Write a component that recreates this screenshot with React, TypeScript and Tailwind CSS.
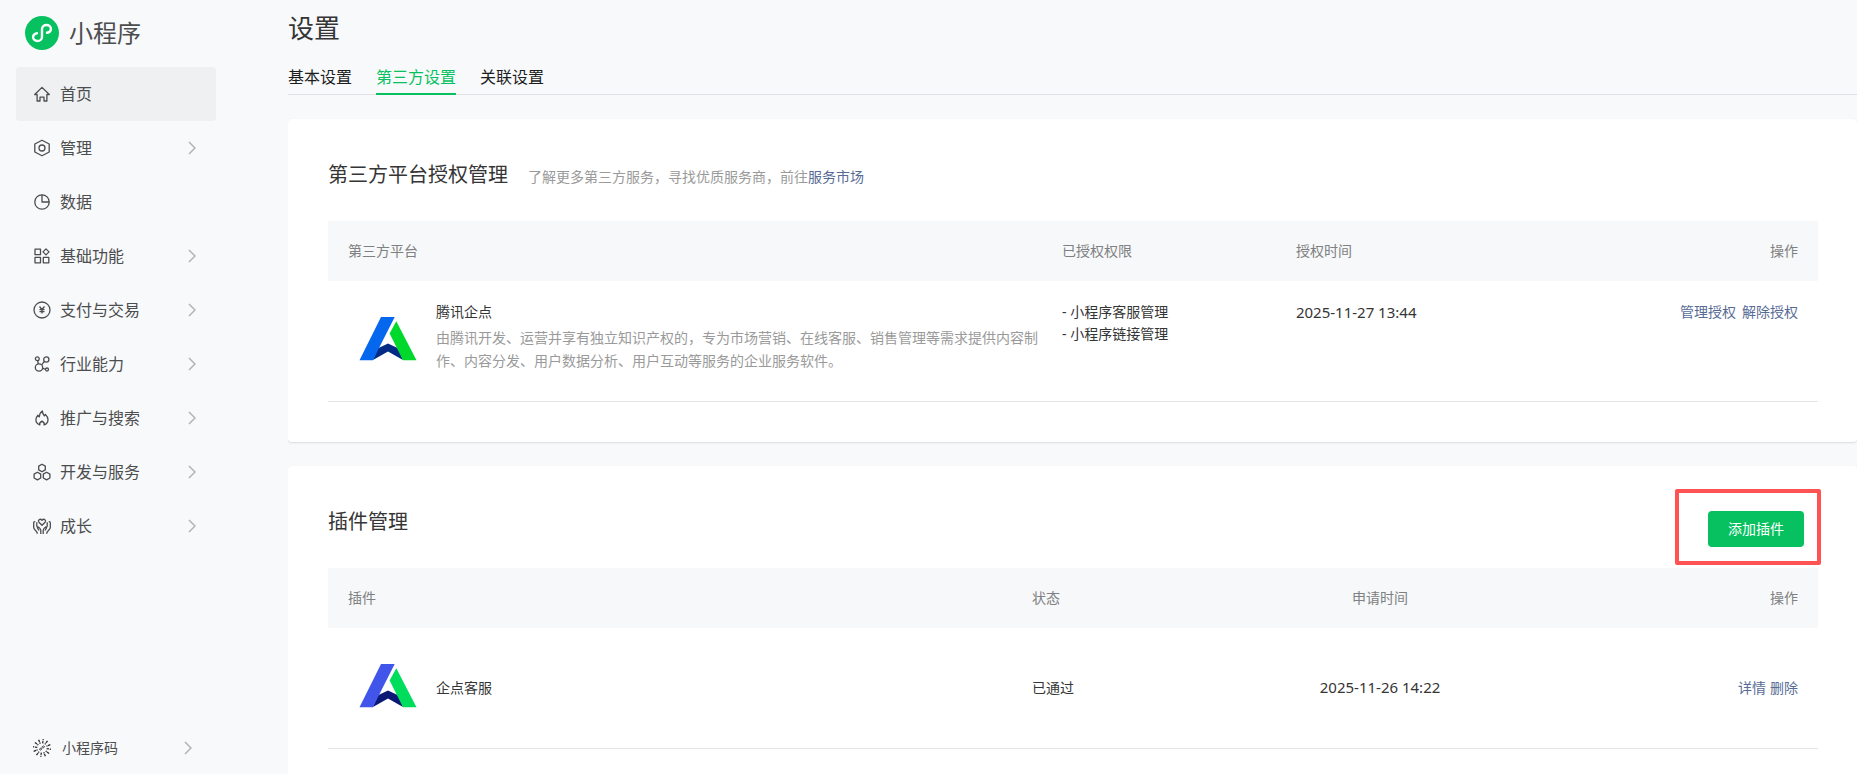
import React from "react";

const LogoMark = () => (
  <svg width="34" height="34" viewBox="0 0 34 34" fill="none" aria-hidden="true">
    <circle cx="17" cy="17" r="17" fill="#07c160" />
    <path
      d="M12 17.200c-2.200.4-3.900 1.900-3.900 3.900 0 2.300 2 3.900 4.400 3.900s4.500-1.700 4.500-4.100v-7.800c0-2.400 2-4.100 4.500-4.100s4.400 1.600 4.400 3.900c0 2-1.700 3.500-3.900 3.900"
      stroke="#fff"
      strokeWidth="2.400"
      strokeLinecap="round"
    />
  </svg>
);

const Icon: React.FC<{ children: React.ReactNode }> = ({ children }) => (
  <svg
    className="shrink-0"
    width="18"
    height="18"
    viewBox="0 0 18 18"
    fill="none"
    stroke="currentColor"
    strokeWidth="1.3"
    strokeLinejoin="round"
    aria-hidden="true"
  >
    {children}
  </svg>
);

const Chevron = () => (
  <svg width="8" height="14" viewBox="0 0 8 14" fill="none" stroke="#b2b3b5" strokeWidth="1.5" aria-hidden="true">
    <path d="M1 1l6 6-6 6" />
  </svg>
);

const icons = {
  home: (
    <Icon>
      <path d="M9 2.400 1.700 9.500h2.400V16h2.900v-3.800h4V16h2.900V9.500h2.400z" />
    </Icon>
  ),
  manage: (
    <Icon>
      <path d="M9 1.200 16.200 5v8L9 16.800 1.800 13V5z" />
      <circle cx="9" cy="9" r="3" />
    </Icon>
  ),
  data: (
    <Icon>
      <circle cx="9" cy="9" r="7.200" />
      <path d="M9 1.800V9h7.200" />
    </Icon>
  ),
  basic: (
    <Icon>
      <path d="M2 2.200h5.500v5.500H2zM2 10.300h5.500v5.500H2zM10.300 10.300h5.500v5.500h-5.500zM13 1.900l3 3-3 3-3-3z" />
    </Icon>
  ),
  pay: (
    <Icon>
      <circle cx="9" cy="9" r="8" />
      <path d="m6.500 5.500 2.500 3 2.500-3M9 8.500v4M6.500 8.700h5M6.500 10.700h5" />
    </Icon>
  ),
  industry: (
    <Icon>
      <circle cx="4.300" cy="3.800" r="1.900" />
      <circle cx="13.300" cy="4.500" r="2.600" />
      <circle cx="6" cy="12.500" r="3.700" />
      <circle cx="14" cy="14.500" r="1.500" />
      <path d="m4.700 5.700.5 3.200M11.400 6.400 8.600 9.800M9.500 13.400l3 .8" />
    </Icon>
  ),
  promote: (
    <Icon>
      <path d="M6.800 16c-2.400-.8-3.900-2.800-3.900-5.400 0-1.900.9-3.200 2-4.400.2.900.7 1.500 1.400 1.700.1-2.400 1.100-4.600 3-6 .1 2.300 1 3.500 2 4.900.6-.3 1-.8 1.100-1.400 1.500 1.400 2.600 3.200 2.600 5.200 0 2.600-1.600 4.700-3.900 5.400.5-1.300 0-2.700-2.100-3.800-2.100 1.100-2.700 2.500-2.200 3.800z" />
    </Icon>
  ),
  develop: (
    <Icon>
      <path d="m9 1.200 3.300 1.900v3.800L9 8.800 5.700 6.900V3.100zM4.400 9.200l3.300 1.900V15l-3.300 1.900L1.100 15v-3.900zM13.600 9.200l3.300 1.900V15l-3.300 1.900-3.300-1.900v-3.900z" />
    </Icon>
  ),
  grow: (
    <Icon>
      <path d="M9 8.300 5.900 5.200C4.500 3.500 6.800 1 9 3.200c2.200-2.200 4.500.3 3.100 2z" />
      <path d="M7.800 17v-3.600c0-1.700-2.600-4-3.400-3.200-.6.600 1.200 2 1.600 3.300M3.800 9.800V5.200M2.300 5C.9 4.200.7 5.200.7 6v4.500c0 2.600 3.600 3 3.600 6.300M10.200 17v-3.600c0-1.700 2.600-4 3.400-3.200.6.600-1.200 2-1.600 3.300M14.200 9.800V5.200M15.700 5c1.400-.8 1.600.2 1.600 1v4.500c0 2.600-3.600 3-3.600 6.300" />
    </Icon>
  ),
};

const navItems = [
  { label: "首页", icon: icons.home, active: true },
  { label: "管理", icon: icons.manage, expandable: true },
  { label: "数据", icon: icons.data },
  { label: "基础功能", icon: icons.basic, expandable: true },
  { label: "支付与交易", icon: icons.pay, expandable: true },
  { label: "行业能力", icon: icons.industry, expandable: true },
  { label: "推广与搜索", icon: icons.promote, expandable: true },
  { label: "开发与服务", icon: icons.develop, expandable: true },
  { label: "成长", icon: icons.grow, expandable: true },
];

const MiniCodeIcon = () => (
  <svg className="shrink-0 text-[#2c2c2c]" width="18" height="18" viewBox="0 0 18 18" fill="none" stroke="currentColor" aria-hidden="true">
    {Array.from({ length: 12 }, (_, i) => (
      <path
        key={i}
        d="M9 0v4.300"
        strokeWidth="1.300"
        strokeDasharray={i % 3 ? "2.600 .5" : "1.200 .8 2.300"}
        transform={`rotate(${i * 30 + 8} 9 9)`}
      />
    ))}
    <path
      d="M8 9.200c-1.100.1-1.700.8-1.300 1.500.6.700 1.900.3 2.100-.8l.4-1.800c.2-1.100 1.500-1.500 2.100-.8.400.7-.2 1.400-1.300 1.500"
      strokeWidth="0.900"
    />
  </svg>
);

const Sidebar = () => (
  <aside className="flex w-[288px] shrink-0 flex-col pl-4 text-[#4c4d4e]">
    <div className="mb-0.5 flex h-[65px] items-center gap-2.5 pl-[9px] text-2xl">
      <LogoMark />
      <span>小程序</span>
    </div>
    <nav className="w-[200px]">
      {navItems.map((item) => (
        <a
          key={item.label}
          href="#"
          className={`flex h-[54px] items-center gap-[9px] rounded pr-5 pl-[17px] text-base ${
            item.active ? "bg-[#eff0f2]" : ""
          }`}
        >
          {item.icon}
          <span className="flex-1">{item.label}</span>
          {item.expandable && <Chevron />}
        </a>
      ))}
    </nav>
    <a href="#" className="mt-auto flex h-[52px] w-[200px] items-center gap-[11px] pr-6 pl-[17px] text-sm">
      <MiniCodeIcon />
      <span className="flex-1">小程序码</span>
      <Chevron />
    </a>
  </aside>
);

// 企点图标，两处仅配色不同
const QidianLogo: React.FC<{ left: string; right: string; base: string }> = ({ left, right, base }) => (
  <svg className="shrink-0" width="80" height="80" viewBox="0 0 80 80" aria-hidden="true">
    <path d="M29.500 47.500 40 42.500l10.500 5L55 59l-15-8.500L25 59z" fill={base} />
    <path d="M33 16h13.700L30.500 48 25 59.300H11.500z" fill={left} />
    <path d="m48.300 20.300 20.200 39H55L41.600 32.500z" fill={right} />
  </svg>
);

const Th: React.FC<{ className?: string; children: React.ReactNode }> = ({ className = "", children }) => (
  <th className={`h-[60px] pl-5 font-normal ${className}`}>{children}</th>
);

const Link: React.FC<{ children: React.ReactNode }> = ({ children }) => (
  <a href="#" className="text-[#576b95]">
    {children}
  </a>
);

const Card: React.FC<{ children: React.ReactNode }> = ({ children }) => (
  <section className="rounded bg-white py-10 pr-[39px] pl-10 shadow-[0_1px_2px_rgba(0,0,0,0.12)]">{children}</section>
);

const tabs = ["基本设置", "第三方设置", "关联设置"];

export default function App() {
  return (
    <div className="flex h-screen overflow-hidden bg-[#f8f9fb] font-['Noto_Sans','Noto_Sans_CJK_SC',sans-serif] text-sm text-[#353535]">
      <Sidebar />
      <main className="min-w-0 flex-1 overflow-y-auto [scrollbar-width:none]">
        <h1 className="pt-2 text-[26px] leading-10">设置</h1>
        <div className="mt-3 mb-6 flex h-[35px] gap-6 border-b border-[#dfe0e3] text-base">
          {tabs.map((tab) => (
            <button
              key={tab}
              type="button"
              className={`h-[35px] border-b-2 ${
                tab === "第三方设置" ? "border-[#07c160] text-[#07c160]" : "border-transparent text-[#1d1d1e]"
              }`}
            >
              {tab}
            </button>
          ))}
        </div>

        <div className="flex flex-col gap-6">
          <Card>
            <div className="flex h-[62px] items-start gap-5 leading-8">
              <h2 className="text-xl leading-8">第三方平台授权管理</h2>
              <p className="pt-0.5 text-[#9a9a9a]">
                了解更多第三方服务，寻找优质服务商，前往<Link>服务市场</Link>
              </p>
            </div>
            <table className="w-full table-fixed text-left">
              <thead className="bg-[#f6f8f9] text-[#7e8081]">
                <tr>
                  <Th className="w-[714px]">第三方平台</Th>
                  <Th className="w-[15.7%]">已授权权限</Th>
                  <Th>授权时间</Th>
                  <Th className="pr-5 text-right">操作</Th>
                </tr>
              </thead>
              <tbody>
                <tr className="border-b border-[#e4e5e7] align-top leading-[22px]">
                  <td className="py-5 pl-5">
                    <div className="flex gap-2">
                      <QidianLogo left="#0467ee" right="#00d82b" base="#012b85" />
                      <div>
                        <div>腾讯企点</div>
                        <p className="pt-[3px] leading-[23px] text-[#9a9a9a]">
                          由腾讯开发、运营并享有独立知识产权的，专为市场营销、在线客服、销售管理等需求提供内容制作、内容分发、用户数据分析、用户互动等服务的企业服务软件。
                        </p>
                      </div>
                    </div>
                  </td>
                  <td className="py-5 pl-5">
                    <div>- 小程序客服管理</div>
                    <div>- 小程序链接管理</div>
                  </td>
                  <td className="py-5 pl-5 text-[15px]">2025-11-27 13:44</td>
                  <td className="px-5 py-5">
                    <div className="flex justify-end gap-1.5">
                      <Link>管理授权</Link>
                      <Link>解除授权</Link>
                    </div>
                  </td>
                </tr>
              </tbody>
            </table>
          </Card>

          <Card>
            <div className="flex h-[62px] items-start justify-between pr-3.5">
              <h2 className="text-xl leading-8">插件管理</h2>
              <div className="relative mt-[5px]">
                <button type="button" className="h-9 w-24 rounded bg-[#07c160] text-white">
                  添加插件
                </button>
                <div className="pointer-events-none absolute -top-[22px] -right-[17px] -bottom-[18px] -left-[33px] rounded-xs border-4 border-[#ff5252]" />
              </div>
            </div>
            <table className="w-full table-fixed text-left">
              <thead className="bg-[#f6f8f9] text-[#7e8081]">
                <tr>
                  <Th className="w-[684px]">插件</Th>
                  <Th className="w-[15%]">状态</Th>
                  <Th className="w-[19.4%] pr-5 text-center">申请时间</Th>
                  <Th className="pr-5 text-right">操作</Th>
                </tr>
              </thead>
              <tbody>
                <tr className="border-b border-[#e4e5e7]">
                  <td className="py-5 pl-5">
                    <div className="flex items-center gap-2">
                      <QidianLogo left="#4155ea" right="#00dc5c" base="#0b1876" />
                      <span>企点客服</span>
                    </div>
                  </td>
                  <td className="pl-5">已通过</td>
                  <td className="px-5 text-center text-[15px]">2025-11-26 14:22</td>
                  <td className="px-5">
                    <div className="flex justify-end gap-1">
                      <Link>详情</Link>
                      <Link>删除</Link>
                    </div>
                  </td>
                </tr>
              </tbody>
            </table>
          </Card>
        </div>
      </main>
    </div>
  );
}
